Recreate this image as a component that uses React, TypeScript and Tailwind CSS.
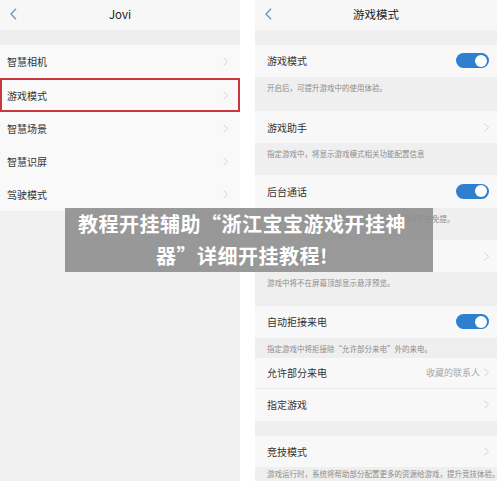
import React from "react";

const FONT = { fontFamily: '"Noto Sans CJK SC", "Noto Sans", sans-serif' };

function Chevron() {
  return (
    <svg width="5" height="9" viewBox="0 0 5 9" className="shrink-0">
      <path d="M0.5 0.5 L4.5 4.5 L0.5 8.5" fill="none" stroke="#cfcfcf" strokeWidth="0.9" />
    </svg>
  );
}

function Back() {
  return (
    <svg width="7" height="12" viewBox="0 0 7 12">
      <path d="M6 0.8 L1 6 L6 11.2" fill="none" stroke="#6f93b8" strokeWidth="1.3" />
    </svg>
  );
}

function Toggle() {
  return (
    <div className="flex h-[15px] w-[33px] items-center justify-end rounded-full bg-[#2f7fcf] pr-[2px]">
      <div className="h-[12px] w-[12px] rounded-full bg-white" />
    </div>
  );
}

function Header({ title }: { title: string }) {
  return (
    <div className="relative flex h-[30px] items-center justify-center bg-[#f7f7f7]">
      <div className="absolute left-[10px] top-[8px]">
        <Back />
      </div>
      <span className="text-[11.5px] text-[#222]">{title}</span>
    </div>
  );
}

const leftItems = ["智慧相机", "游戏模式", "智慧场景", "智慧识屏", "驾驶模式"];

function LeftPanel() {
  return (
    <div className="flex h-full w-[240px] flex-col bg-[#f1f1f1]">
      <Header title="Jovi" />
      <div className="h-[15px] bg-[#eeeeee]" />
      <div className="bg-[#f9f9f9]">
        {leftItems.map((item, i) => (
          <div
            key={item}
            className={
              i === 1
                ? "flex h-[34px] items-center justify-between border-2 border-[#c9363b] pl-[5px] pr-[10px]"
                : "flex h-[33px] items-center justify-between pl-[7px] pr-[12px]"
            }
          >
            <span className="text-[10px] text-[#333]">{item}</span>
            <Chevron />
          </div>
        ))}
      </div>
    </div>
  );
}

function Row({ title, right, h = "h-[33px]" }: { title: string; right: React.ReactNode; h?: string }) {
  return (
    <div className={`flex ${h} items-center justify-between bg-[#f8f8f8] pl-[12px] pr-[8px]`}>
      <span className="text-[10px] text-[#333]">{title}</span>
      {right}
    </div>
  );
}

function Desc({ text, h = "h-[22px]" }: { text: string; h?: string }) {
  return (
    <div className={`flex ${h} items-center bg-[#efefef] pl-[12px]`}>
      <span className="whitespace-nowrap text-[7.5px] text-[#8c8c8c]">{text}</span>
    </div>
  );
}

function Gap({ h }: { h: string }) {
  return <div className={`${h} bg-[#efefef]`} />;
}

function RightPanel() {
  return (
    <div className="flex h-full w-[242px] flex-col overflow-hidden bg-[#efefef]">
      <Header title="游戏模式" />
      <Gap h="h-[15px]" />
      <Row title="游戏模式" right={<Toggle />} />
      <Desc text="开启后，可提升游戏中的使用体验。" />
      <Gap h="h-[12px]" />
      <Row title="游戏助手" right={<Chevron />} />
      <Desc text="指定游戏中，将显示游戏模式相关功能配置信息" h="h-[20px]" />
      <Gap h="h-[12px]" />
      <Row title="后台通话" right={<Toggle />} />
      <Desc text="游戏中接听来电且未连接耳机时，将自动同时开启免提。" />
      <Gap h="h-[11px]" />
      <Row title="屏蔽顶部预览" right={<Chevron />} h="h-[32px]" />
      <Desc text="游戏中将不在屏幕顶部显示悬浮预览。" />
      <Gap h="h-[12px]" />
      <Row title="自动拒接来电" right={<Toggle />} />
      <Desc text="指定游戏中将拒接除“允许部分来电”外的来电。" h="h-[20px]" />
      <Row
        title="允许部分来电"
        h="h-[30px]"
        right={
          <div className="flex items-center gap-[4px]">
            <span className="text-[9px] text-[#a8a8a8]">收藏的联系人</span>
            <Chevron />
          </div>
        }
      />
      <div className="border-t border-[#ececec]">
        <Row title="指定游戏" right={<Chevron />} h="h-[32px]" />
      </div>
      <Gap h="h-[15px]" />
      <Row title="竞技模式" right={<Chevron />} h="h-[32px]" />
      <Desc text="游戏运行时，系统将帮助部分配置更多的资源给游戏，提升竞技体验。" h="h-[14px]" />
    </div>
  );
}

export default function App() {
  return (
    <div className="relative flex h-[481px] w-[500px] gap-[15px] overflow-hidden bg-white" style={FONT}>
      <LeftPanel />
      <RightPanel />
      {/* 覆盖标题条 */}
      <div className="absolute left-[65px] top-[208px] flex h-[64px] w-[368px] items-center justify-center bg-[#8e8e8e]/90 pr-[14px]">
        <p className="whitespace-nowrap text-center text-[20px] font-bold leading-[32px] tracking-[0.5px] text-white">
          教程开挂辅助“浙江宝宝游戏开挂神
          <br />
          器”详细开挂教程!
        </p>
      </div>
    </div>
  );
}
